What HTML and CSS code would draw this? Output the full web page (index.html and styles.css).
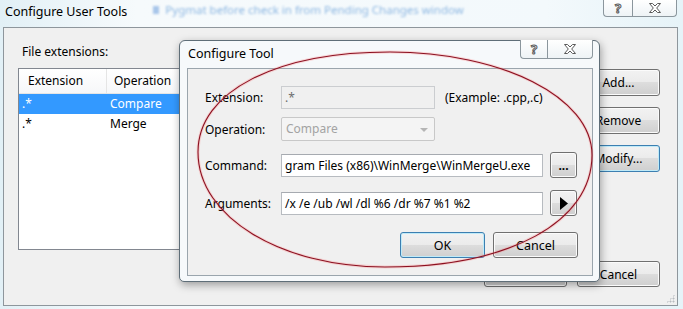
FILE: index.html
```html
<!DOCTYPE html>
<html>

<head>
    <title>Configure User Tools</title>
    <link rel="stylesheet" href="styles.css">
</head>

<body>
    <div class="window">
        <div class="titlebar">
            <span class="title">Configure User Tools</span>
            <span class="ghost"><i class="ghost-box"></i>Pygmat before check in from Pending Changes window</span>
            <div class="caption">
                <span class="cap-btn cap-help">?</span>
                <span class="cap-btn cap-close">
                    <svg width="12" height="10" viewBox="0 0 12 10"><polygon points="0.5,0.5 3.5,0.5 6,3 8.5,0.5 11.5,0.5 7.7,5 11.5,9.5 8.5,9.5 6,7 3.5,9.5 0.5,9.5 4.3,5" /></svg>
                </span>
            </div>
        </div>

        <div class="client">
            <div class="main">
                <div class="list-side">
                    <div class="label">File extensions:</div>
                    <div class="list">
                        <div class="list-head">
                            <span class="col-ext">Extension</span>
                            <span class="col-op">Operation</span>
                        </div>
                        <div class="row selected">
                            <span class="col-ext">.*</span>
                            <span class="col-op">Compare</span>
                        </div>
                        <div class="row">
                            <span class="col-ext">.*</span>
                            <span class="col-op">Merge</span>
                        </div>
                    </div>
                </div>
                <div class="side-buttons">
                    <button class="btn">Add...</button>
                    <button class="btn">Remove</button>
                    <button class="btn default">Modify...</button>
                </div>
            </div>
            <div class="footer">
                <button class="btn">OK</button>
                <button class="btn">Cancel</button>
            </div>
            <div class="grip"></div>
        </div>
    </div>

    <!-- the child dialog sits over the parent window -->
    <div class="dialog">
        <div class="dlg-head">
            <span class="dlg-title">Configure Tool</span>
            <div class="dlg-caption">
                <span class="cap-btn cap-help">?</span>
                <span class="cap-btn cap-close">
                    <svg width="12" height="10" viewBox="0 0 12 10"><polygon points="0.5,0.5 3.5,0.5 6,3 8.5,0.5 11.5,0.5 7.7,5 11.5,9.5 8.5,9.5 6,7 3.5,9.5 0.5,9.5 4.3,5" /></svg>
                </span>
            </div>
        </div>
        <div class="dlg-client">
            <div class="field f-ext">
                <span class="f-label">Extension:</span>
                <span class="input short disabled">.*</span>
                <span class="hint">(Example: .cpp,.c)</span>
            </div>
            <div class="field f-op">
                <span class="f-label">Operation:</span>
                <span class="select">Compare<i class="arrow"></i></span>
            </div>
            <div class="field f-cmd">
                <span class="f-label">Command:</span>
                <span class="input long">gram Files (x86)\WinMerge\WinMergeU.exe</span>
                <button class="btn small dots">...</button>
            </div>
            <div class="field f-args">
                <span class="f-label">Arguments:</span>
                <span class="input long">/x /e /ub /wl /dl %6 /dr %7 %1 %2</span>
                <button class="btn small">
                    <svg width="8" height="13" viewBox="0 0 8 13"><polygon points="0,0 8,6.5 0,13" /></svg>
                </button>
            </div>
            <div class="dlg-footer">
                <button class="btn default">OK</button>
                <button class="btn">Cancel</button>
            </div>
        </div>
    </div>

    <!-- hand drawn red ring -->
    <svg class="mark" width="683" height="309" viewBox="0 0 683 309">
        <path class="mark-glow" d="M 390 52 C 501 52 592 97 592 155 C 592 222 510 267 385 267 C 282 267 198 218 198 152 C 198 91 277 52 390 52 Z" />
        <path class="mark-line" d="M 390 52 C 501 52 592 97 592 155 C 592 222 510 267 385 267 C 282 267 198 218 198 152 C 198 91 277 52 390 52 Z" />
    </svg>
</body>

</html>
```

FILE: styles.css
```css
* {
    box-sizing: border-box;
}

body {
    margin: 0;
    width: 683px;
    height: 309px;
    overflow: hidden;
    position: relative;
    font-family: "Noto Sans", sans-serif;
    font-size: 12px;
    color: #000;
    background: #dcecf3;
}

/* parent window */
.window {
    height: 309px;
    padding: 0 5px 3px 3px;
    background: linear-gradient(90deg, #e2f0f6 0%, #f6fafc 20%, #f3f9fc 80%, #e6f3f8 100%);
    display: flex;
    flex-direction: column;
}

.titlebar {
    height: 27px;
    display: flex;
    align-items: flex-start;
}

.title {
    padding: 4px 0 0 2px;
    line-height: 16px;
    font-size: 12.5px;
}

.ghost {
    margin: 4px 0 0 26px;
    line-height: 12px;
    font-size: 11.5px;
    color: #8fb8e2;
    filter: blur(1px);
    display: flex;
    align-items: center;
    gap: 6px;
}

.ghost-box {
    width: 6px;
    height: 8px;
    background: #a8c6ea;
}

.caption,
.dlg-caption {
    margin-left: auto;
    display: flex;
}

.caption {
    height: 17px;
    margin-right: 1px;
}

.cap-btn {
    display: flex;
    align-items: center;
    justify-content: center;
    border: 1px solid #8b969d;
    border-top: none;
    background: linear-gradient(#ffffff, #eef3f6);
    font-weight: bold;
    font-size: 13px;
    line-height: 13px;
    color: #fff;
    -webkit-text-stroke: 1px #5a5a5a;
}

.cap-help {
    width: 29px;
    border-right: none;
    border-bottom-left-radius: 4px;
}

.cap-close {
    width: 45px;
    border-bottom-right-radius: 4px;
}

.cap-btn svg polygon {
    fill: #fff;
    stroke: #5a5a5a;
    stroke-width: 1;
}

.client {
    flex: 1;
    border: 1px solid #8e969c;
    background: #f0f0f0;
    display: flex;
    flex-direction: column;
    padding: 16px 17px 0 14px;
    position: relative;
}

.main {
    display: flex;
    gap: 12px;
    height: 206px;
}

.list-side {
    flex: 1;
}

.label {
    line-height: 16px;
    height: 16px;
    margin: 0 0 8px 4px;
}

.list {
    height: 182px;
    border: 1px solid #828790;
    background: #fff;
}

.list-head {
    display: flex;
    height: 25px;
    border-bottom: 1px solid #e5e5e5;
    background: linear-gradient(#ffffff, #f6f7f9);
    line-height: 24px;
}

.list-head .col-ext {
    width: 88px;
    padding-left: 9px;
    border-right: 1px solid #e5e5e5;
}

.list-head .col-op {
    padding-left: 7px;
}

.row {
    display: flex;
    height: 20px;
    line-height: 20px;
}

.row .col-ext {
    width: 88px;
    padding-left: 3px;
}

.row .col-op {
    padding-left: 3px;
}

.row.selected {
    background: #3399ff;
    color: #fff;
}

.side-buttons {
    width: 83px;
    display: flex;
    flex-direction: column;
    gap: 11px;
    padding-top: 25px;
}

.btn {
    height: 27px;
    padding: 0;
    border: 1px solid #707070;
    border-radius: 3px;
    background: linear-gradient(#f2f2f2 0%, #ebebeb 49%, #dddddd 50%, #cfcfcf 100%);
    box-shadow: inset 0 0 0 1px #fbfbfb;
    font-family: inherit;
    font-size: 12px;
    color: #000;
}

.btn.default {
    border-color: #3c7fb1;
    box-shadow: inset 0 0 0 1px #bfeaf8;
}

.footer {
    display: flex;
    justify-content: flex-end;
    gap: 10px;
    margin-top: 11px;
}

.footer .btn {
    width: 83px;
    height: 26px;
}

.grip {
    position: absolute;
    right: 2px;
    bottom: 2px;
    width: 9px;
    height: 9px;
    background: radial-gradient(circle, #b8bcc0 0.8px, transparent 1.2px) 0 0 / 3px 3px;
    clip-path: polygon(100% 0, 100% 100%, 0 100%);
}

/* child dialog */
.dialog {
    position: absolute;
    left: 179px;
    top: 40px;
    width: 421px;
    height: 242px;
    border: 1px solid #5f6e78;
    border-radius: 6px 6px 5px 5px;
    background: #f6f9fb;
    box-shadow: 1px 3px 8px rgba(0, 0, 0, 0.35);
    padding: 0 6px 5px 7px;
    display: flex;
    flex-direction: column;
}

.dlg-head {
    height: 27px;
    display: flex;
    align-items: flex-start;
}

.dlg-title {
    padding: 5px 0 0 1px;
    line-height: 16px;
    font-size: 12.5px;
}

.dlg-caption {
    height: 19px;
    margin-top: -1px;
}

.dlg-caption .cap-help {
    width: 27px;
}

.dlg-caption .cap-close {
    width: 46px;
}

.dlg-client {
    flex: 1;
    border: 1px solid #9aa5ad;
    background: #f0f0f0;
    padding: 17px 14px 0 17px;
}

.field {
    display: flex;
    align-items: center;
    height: 23px;
}

.f-op {
    height: 24px;
    margin-top: 8px;
}

.f-cmd {
    height: 26px;
    margin-top: 11px;
}

.f-args {
    height: 26px;
    margin-top: 12px;
}

.f-label {
    width: 76px;
}

.input {
    height: 23px;
    line-height: 21px;
    padding-left: 3px;
    border: 1px solid #b7bbc0;
    border-top-color: #a6aab0;
    background: #fff;
    white-space: nowrap;
    overflow: hidden;
}

.input.short {
    width: 154px;
}

.input.long {
    width: 262px;
}

.input.disabled {
    background: #f0f0f0;
    border-color: #cbcdd0;
    color: #6d6d6d;
}

.hint {
    margin-left: 10px;
}

.select {
    position: relative;
    width: 154px;
    height: 24px;
    line-height: 22px;
    padding-left: 4px;
    border: 1px solid #c8c8c8;
    border-radius: 2px;
    background: #f4f4f4;
    color: #a3a3a3;
}

.arrow {
    position: absolute;
    right: 6px;
    top: 10px;
    border-left: 4px solid transparent;
    border-right: 4px solid transparent;
    border-top: 4px solid #b5b5b5;
}

.btn.small {
    width: 27px;
    height: 26px;
    margin-left: 7px;
    display: flex;
    align-items: center;
    justify-content: center;
}

.btn.dots {
    align-items: flex-end;
    padding-bottom: 6px;
    line-height: 10px;
    font-weight: bold;
}

.dlg-footer {
    display: flex;
    justify-content: flex-end;
    gap: 8px;
    margin-top: 16px;
}

.dlg-footer .btn {
    width: 85px;
    height: 26px;
    font-size: 12.5px;
}

.mark {
    position: absolute;
    left: 0;
    top: 0;
    pointer-events: none;
}

.mark path {
    fill: none;
}

.mark-glow {
    stroke: #ff7070;
    stroke-width: 3;
    opacity: 0.25;
}

.mark-line {
    stroke: #8b1020;
    stroke-width: 1.1;
}
```
